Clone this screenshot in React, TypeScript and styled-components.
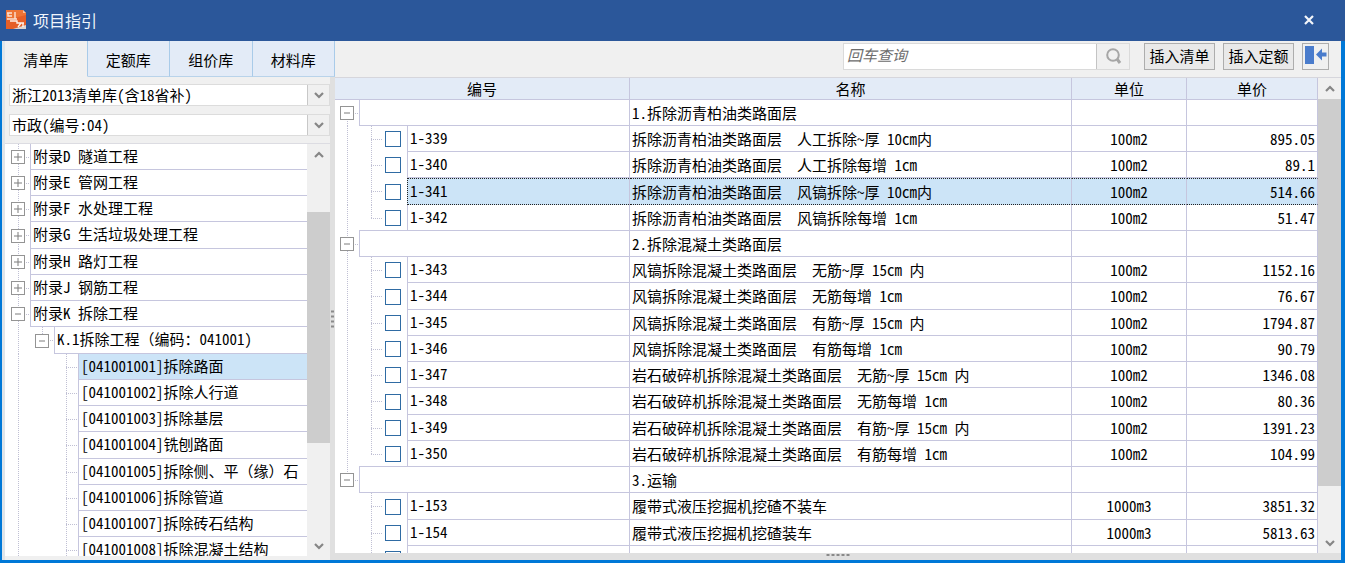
import React, { useState } from "react";
import styled, { createGlobalStyle, css } from "styled-components";

const LINE = "#c6c6de";
const HEADER = "#e3ebf7";
const SELECTED = "#cce4f7";

const GlobalStyle = createGlobalStyle`
  * { box-sizing: border-box; }
  body {
    margin: 0;
    font-family: "Noto Sans CJK SC", "Liberation Sans", sans-serif;
    font-size: 15px;
    font-feature-settings: "hwid";
    color: #000;
  }
  button, input, select { font: inherit; font-feature-settings: inherit; color: inherit; margin: 0; }
  ul { list-style: none; margin: 0; padding: 0; }
`;

const Window = styled.div`
  display: flex;
  flex-direction: column;
  height: 100vh;
  background: #0078d7;
`;

const TitleBar = styled.header`
  display: flex;
  align-items: center;
  flex: none;
  height: 41px;
  padding: 0 28px 2px 6px;
  gap: 6px;
  background: #2b579a;
  color: #f0f5fc;
`;

const Title = styled.h1`
  flex: 1;
  margin: 0;
  font-size: 16px;
  line-height: 24px;
  font-weight: 400;
`;

const CloseButton = styled.button`
  display: flex;
  padding: 2px;
  border: 0;
  background: none;
`;

const Body = styled.main`
  display: flex;
  flex: 1;
  min-height: 0;
  margin: 0 4px 3px 2px;
  background: #f0f0f0;
  border-left: 3px solid #dfe5ea;
`;

const Sidebar = styled.aside`
  display: flex;
  flex-direction: column;
  flex: none;
  width: 330px;
`;

const Tabs = styled.div`
  display: flex;
  flex: none;
  height: 36px;
`;

const Tab = styled.button<{ $active?: boolean }>`
  flex: 1;
  padding: 2px 0 0;
  border: 0;
  border-right: 1px solid #a9cbe9;
  border-bottom: 1px solid ${(p) => (p.$active ? "#f0f0f0" : "#b9d3ea")};
  background: ${(p) => (p.$active ? "#f0f0f0" : HEADER)};
`;

const SidebarMain = styled.div`
  position: relative;
  display: flex;
  flex-direction: column;
  flex: 1;
  min-height: 0;
  padding: 7px 0 4px;
  border-right: 5px solid #e0e0e0;
`;

const SelectBox = styled.label`
  display: grid;
  grid-template-columns: 1fr 22px;
  flex: none;
  height: 22px;
  margin-left: 4px;
  border: 1px solid #dcdcdc;
  background: #fff;
  & + & { margin-top: 8px; }
`;

const Select = styled.select`
  grid-area: 1 / 1 / 2 / 3;
  appearance: none;
  width: 100%;
  height: 20px;
  padding: 0 24px 0 2px;
  border: 0;
  line-height: 20px;
  background: none;
`;

const SelectArrow = styled.span`
  grid-area: 1 / 2 / 2 / 3;
  display: flex;
  align-items: center;
  justify-content: center;
  border-left: 1px solid #c8c8c8;
  background: #f0f0f0;
  pointer-events: none;
`;

const TreePane = styled.div`
  display: flex;
  flex: 1;
  min-height: 0;
  margin-top: 7px;
  border-top: 1px solid #dcdce2;
  background: #fff;
  padding-left: 1px;
`;

const TreeList = styled.ul`
  flex: 1;
  min-width: 0;
  overflow: hidden;
`;

const TreeRow = styled.li`
  display: flex;
  height: 26px;
  &:nth-child(4n) { height: 27px; }
`;

/* One 24px indent step, with the dotted guide lines of the tree. */
const Slot = styled.span<{ $v?: "full" | "upper" | "lower"; $h?: boolean }>`
  display: flex;
  align-items: center;
  justify-content: center;
  flex: none;
  width: 24px;
  background-repeat: no-repeat;
  background-image:
    repeating-linear-gradient(to bottom, #c0c0d4 0 1px, transparent 1px 2px),
    repeating-linear-gradient(to right, #c0c0d4 0 1px, transparent 1px 2px);
  background-size:
    ${(p) => (p.$v ? 1 : 0)}px ${(p) => (p.$v === "full" ? "100%" : "50%")},
    ${(p) => (p.$h ? 12 : 0)}px 1px;
  background-position: 12px ${(p) => (p.$v === "lower" ? "100%" : "0")}, 12px 50%;
`;

const Toggle = styled.button`
  display: flex;
  width: 14px;
  height: 14px;
  padding: 0;
  border: 0;
  background: #fff;
`;

const TreeLabel = styled.span<{ $selected?: boolean }>`
  flex: 1;
  min-width: 0;
  padding-left: 2px;
  border-left: 1px solid ${LINE};
  border-bottom: 1px solid ${LINE};
  line-height: 24px;
  white-space: pre;
  overflow: hidden;
  background: ${(p) => (p.$selected ? SELECTED : "#fff")};
`;

/* Keeps full-width punctuation at its full width. */
const FullWidth = styled.span`
  font-feature-settings: normal;
`;

const ScrollTrack = styled.div`
  display: flex;
  flex-direction: column;
  flex: none;
  width: 23px;
  background: #f0f0f0;
`;

const ScrollButton = styled.button`
  display: flex;
  align-items: center;
  justify-content: center;
  flex: none;
  height: 21px;
  padding: 0;
  border: 0;
  background: #f0f0f0;
`;

const ScrollSpace = styled.div<{ $grow: number }>`
  flex: ${(p) => p.$grow} 1 0;
`;

const ScrollThumb = styled(ScrollSpace)`
  background: #cdcdcd;
`;

const Grip = styled.span<{ $vertical?: boolean }>`
  position: absolute;
  display: grid;
  grid-auto-flow: ${(p) => (p.$vertical ? "row" : "column")};
  gap: ${(p) => (p.$vertical ? 3 : 2)}px;
  ${(p) =>
    p.$vertical
      ? css`right: -4px; top: 50%; transform: translateY(-50%);`
      : css`left: 50%; top: 1px; transform: translateX(-50%);`}
`;

const GripDot = styled.i`
  width: 3px;
  height: 2px;
  background: #8a8a8a;
`;

const Content = styled.section`
  display: flex;
  flex-direction: column;
  flex: 1;
  min-width: 0;
`;

const Toolbar = styled.div`
  display: flex;
  align-items: center;
  justify-content: flex-end;
  flex: none;
  height: 36px;
  padding: 0 12px 6px 0;
  gap: 8px;
`;

const Search = styled.form`
  display: flex;
  width: 287px;
  height: 27px;
  margin-right: 6px;
  border: 1px solid #dadada;
`;

const SearchInput = styled.input`
  flex: 1;
  min-width: 0;
  padding: 0 3px 3px;
  border: 0;
  background: #fff;
  &::placeholder { color: #6d6d6d; font-style: italic; opacity: 1; }
`;

const SearchButton = styled.button`
  display: flex;
  align-items: center;
  justify-content: center;
  width: 33px;
  padding: 0;
  border: 0;
  border-left: 1px solid #c4c4c4;
  background: #f0f0f0;
`;

const ToolButton = styled.button<{ $icon?: boolean }>`
  display: flex;
  align-items: center;
  justify-content: center;
  width: ${(p) => (p.$icon ? 27 : 71)}px;
  height: 27px;
  padding: 0 0 2px;
  border: 1px solid #adadad;
  background: ${(p) => (p.$icon ? "#f0f0f0" : "#e9e9e9")};
  white-space: nowrap;
`;

const TablePane = styled.div`
  display: flex;
  flex: 1;
  min-height: 0;
  border-top: 1px solid #d6d6dc;
  background: #fff;
`;

const TableClip = styled.div`
  flex: 1;
  min-width: 0;
  overflow: hidden;
`;

const Table = styled.table`
  width: 100%;
  table-layout: fixed;
  border-collapse: separate;
  border-spacing: 0;
`;

const HeadCell = styled.th<{ $width?: number }>`
  width: ${(p) => (p.$width ? `${p.$width}px` : "auto")};
  height: 22px;
  padding: 0;
  border-right: 1px solid ${LINE};
  border-bottom: 1px solid ${LINE};
  background: ${HEADER};
  font-weight: 400;
  line-height: 20px;
`;

const selectedEdges = css`
  background: ${SELECTED};
  border-top: 1px dotted #222;
  border-bottom: 1px dotted #222;
`;

const BodyRow = styled.tr`
  height: 26px;
  &:nth-child(4n) { height: 27px; }
`;

const TreeCell = styled.td`
  height: inherit;
  padding: 0;
  border-right: 1px solid ${LINE};
`;

const TreeCellInner = styled.div`
  display: flex;
  height: 100%;
`;

const Cell = styled.td<{ $align?: "center" | "right"; $selected?: boolean }>`
  padding: 0 2px;
  border-right: 1px solid ${LINE};
  border-bottom: 1px solid ${LINE};
  text-align: ${(p) => p.$align ?? "left"};
  line-height: 24px;
  white-space: pre;
  overflow: hidden;
  ${(p) => p.$selected && selectedEdges}
`;

const GroupBox = styled.span`
  flex: 1;
  margin-top: -1px;
  border: 1px solid ${LINE};
  border-right: 0;
`;

const Code = styled.span<{ $selected?: boolean }>`
  flex: 1;
  padding-left: 2px;
  border-left: 1px solid ${LINE};
  border-bottom: 1px solid ${LINE};
  line-height: 24px;
  ${(p) => p.$selected && css`${selectedEdges} border-left: 1px dotted #222;`}
`;

const Check = styled.input`
  appearance: none;
  width: 16px;
  height: 16px;
  margin: 0 4px 0 0;
  border: 1px solid #2f6ba3;
  background: #fff;
  &:checked { background: #2f6ba3; }
`;

const StatusBar = styled.footer`
  position: relative;
  flex: none;
  height: 7px;
  background: #e0e0e0;
`;

function Chevron({ up = false }: { up?: boolean }) {
  return (
    <svg width="10" height="8" viewBox="0 0 10 8" aria-hidden="true">
      <path d={up ? "M1 6 L5 2 L9 6" : "M1 2 L5 6 L9 2"} fill="none" stroke="#868686" strokeWidth="2.2" />
    </svg>
  );
}

function Expander({ open, label }: { open: boolean; label: string }) {
  return (
    <Toggle aria-label={label} aria-expanded={open}>
      <svg width="14" height="14" viewBox="0 0 14 14" aria-hidden="true">
        <rect x="0.5" y="0.5" width="13" height="13" fill="#fff" stroke="#949494" />
        <path d={open ? "M4 7H10" : "M3 7H11M7 3V11"} stroke="#7c7c7c" strokeWidth="1" />
      </svg>
    </Toggle>
  );
}

function Logo() {
  return (
    <svg width="21" height="21" viewBox="0 0 21 21" aria-hidden="true">
      <path d="M0 1H17L20 4V20H0Z" fill="#ee7436" />
      <path d="M0 11L20 6V20H0Z" fill="#e65f28" />
      <path d="M17 1L20 4H17Z" fill="#f9c3a0" />
      <path d="M7 20L20 16V20Z" fill="#dcd6d2" />
      <path d="M1 4H6M2 4V7H6M9 3V10M1 10H11" fill="none" stroke="#fbe3d6" strokeWidth="1.4" />
      <path d="M4 12H11V14H18M12 18L15 14M17 14V18" fill="none" stroke="#fff3ea" strokeWidth="1.4" />
    </svg>
  );
}

function Scrollbar({ before, thumb, after }: { before: number; thumb: number; after: number }) {
  return (
    <ScrollTrack>
      <ScrollButton aria-label="向上滚动"><Chevron up /></ScrollButton>
      <ScrollSpace $grow={before} />
      <ScrollThumb $grow={thumb} />
      <ScrollSpace $grow={after} />
      <ScrollButton aria-label="向下滚动"><Chevron /></ScrollButton>
    </ScrollTrack>
  );
}

function Label({ text }: { text: string }) {
  return (
    <>
      {text.split(/([（）、：])/).map((part, i) => (i % 2 ? <FullWidth key={i}>{part}</FullWidth> : part))}
    </>
  );
}

const tabs = ["清单库", "定额库", "组价库", "材料库"];

const tree = [
  { level: 0, text: "附录D 隧道工程" },
  { level: 0, text: "附录E 管网工程" },
  { level: 0, text: "附录F 水处理工程" },
  { level: 0, text: "附录G 生活垃圾处理工程" },
  { level: 0, text: "附录H 路灯工程" },
  { level: 0, text: "附录J 钢筋工程" },
  { level: 0, text: "附录K 拆除工程", open: true },
  { level: 1, text: "K.1拆除工程（编码：041001)", open: true },
  { level: 2, text: "[041001001]拆除路面", selected: true },
  { level: 2, text: "[041001002]拆除人行道" },
  { level: 2, text: "[041001003]拆除基层" },
  { level: 2, text: "[041001004]铣刨路面" },
  { level: 2, text: "[041001005]拆除侧、平（缘）石" },
  { level: 2, text: "[041001006]拆除管道" },
  { level: 2, text: "[041001007]拆除砖石结构" },
  { level: 2, text: "[041001008]拆除混凝土结构" },
];

type Item = { code?: string; name: string; unit?: string; price?: string; last?: boolean; selected?: boolean };

const items: Item[] = [
  { name: "1.拆除沥青柏油类路面层" },
  { code: "1-339", name: "拆除沥青柏油类路面层  人工拆除~厚 10cm内", unit: "100m2", price: "895.05" },
  { code: "1-340", name: "拆除沥青柏油类路面层  人工拆除每增 1cm", unit: "100m2", price: "89.1" },
  { code: "1-341", name: "拆除沥青柏油类路面层  风镐拆除~厚 10cm内", unit: "100m2", price: "514.66", selected: true },
  { code: "1-342", name: "拆除沥青柏油类路面层  风镐拆除每增 1cm", unit: "100m2", price: "51.47", last: true },
  { name: "2.拆除混凝土类路面层" },
  { code: "1-343", name: "风镐拆除混凝土类路面层  无筋~厚 15cm 内", unit: "100m2", price: "1152.16" },
  { code: "1-344", name: "风镐拆除混凝土类路面层  无筋每增 1cm", unit: "100m2", price: "76.67" },
  { code: "1-345", name: "风镐拆除混凝土类路面层  有筋~厚 15cm 内", unit: "100m2", price: "1794.87" },
  { code: "1-346", name: "风镐拆除混凝土类路面层  有筋每增 1cm", unit: "100m2", price: "90.79" },
  { code: "1-347", name: "岩石破碎机拆除混凝土类路面层  无筋~厚 15cm 内", unit: "100m2", price: "1346.08" },
  { code: "1-348", name: "岩石破碎机拆除混凝土类路面层  无筋每增 1cm", unit: "100m2", price: "80.36" },
  { code: "1-349", name: "岩石破碎机拆除混凝土类路面层  有筋~厚 15cm 内", unit: "100m2", price: "1391.23" },
  { code: "1-350", name: "岩石破碎机拆除混凝土类路面层  有筋每增 1cm", unit: "100m2", price: "104.99", last: true },
  { name: "3.运输" },
  { code: "1-153", name: "履带式液压挖掘机挖碴不装车", unit: "1000m3", price: "3851.32" },
  { code: "1-154", name: "履带式液压挖掘机挖碴装车", unit: "1000m3", price: "5813.63" },
  { code: "", name: "" },
];

function ItemRow({ item, root }: { item: Item; root: "full" | "upper" | "lower" | undefined }) {
  const group = item.code === undefined;
  return (
    <BodyRow>
      <TreeCell>
        <TreeCellInner>
          <Slot $v={root} $h={group}>{group && <Expander open label={item.name} />}</Slot>
          {group ? (
            <GroupBox />
          ) : (
            <>
              <Slot $v={item.last ? "upper" : "full"} $h />
              <Slot><Check type="checkbox" aria-label={item.code || "定额"} /></Slot>
              <Code $selected={item.selected}>{item.code}</Code>
            </>
          )}
        </TreeCellInner>
      </TreeCell>
      <Cell $selected={item.selected}>{item.name}</Cell>
      <Cell $align="center" $selected={item.selected}>{item.unit}</Cell>
      <Cell $align="right" $selected={item.selected}>{item.price}</Cell>
    </BodyRow>
  );
}

export default function App() {
  const [tab, setTab] = useState(0);
  const lastGroup = items.map((i) => i.code === undefined).lastIndexOf(true);
  const rootLine = (i: number) =>
    i === 0 ? "lower" : i < lastGroup ? "full" : i === lastGroup ? "upper" : undefined;

  return (
    <Window>
      <GlobalStyle />
      <TitleBar>
        <Logo />
        <Title>项目指引</Title>
        <CloseButton aria-label="关闭">
          <svg width="12" height="10" viewBox="0 0 12 10" aria-hidden="true">
            <path d="M2 1L10 9M10 1L2 9" stroke="#f4f7fb" strokeWidth="2.2" />
          </svg>
        </CloseButton>
      </TitleBar>
      <Body>
        <Sidebar>
          <Tabs role="tablist">
            {tabs.map((t, i) => (
              <Tab key={t} role="tab" aria-selected={i === tab} $active={i === tab} onClick={() => setTab(i)}>
                {t}
              </Tab>
            ))}
          </Tabs>
          <SidebarMain>
            <SelectBox>
              <Select aria-label="清单库"><option>浙江2013清单库(含18省补)</option></Select>
              <SelectArrow><Chevron /></SelectArrow>
            </SelectBox>
            <SelectBox>
              <Select aria-label="专业"><option>市政(编号:04)</option></Select>
              <SelectArrow><Chevron /></SelectArrow>
            </SelectBox>
            <TreePane>
              <TreeList>
                {tree.map((n) => (
                  <TreeRow key={n.text}>
                    <Slot $v="full" $h={n.level === 0}>
                      {n.level === 0 && <Expander open={!!n.open} label={n.text} />}
                    </Slot>
                    {n.level === 1 && <Slot $v="upper" $h><Expander open label={n.text} /></Slot>}
                    {n.level === 2 && <><Slot /><Slot $v="full" $h /></>}
                    <TreeLabel $selected={n.selected}><Label text={n.text} /></TreeLabel>
                  </TreeRow>
                ))}
              </TreeList>
              <Scrollbar before={47} thumb={232} after={93} />
            </TreePane>
            <Grip $vertical>{[0, 1, 2, 3].map((d) => <GripDot key={d} />)}</Grip>
          </SidebarMain>
        </Sidebar>
        <Content>
          <Toolbar>
            <Search onSubmit={(e) => e.preventDefault()}>
              <SearchInput placeholder="回车查询" aria-label="回车查询" />
              <SearchButton aria-label="查询">
                <svg width="18" height="18" viewBox="0 0 18 18" aria-hidden="true">
                  <circle cx="9" cy="8" r="5.8" fill="none" stroke="#a6a6a6" strokeWidth="2" />
                  <path d="M13 12L16 16" stroke="#a6a6a6" strokeWidth="3" />
                </svg>
              </SearchButton>
            </Search>
            <ToolButton>插入清单</ToolButton>
            <ToolButton>插入定额</ToolButton>
            <ToolButton $icon aria-label="收起面板">
              <svg width="23" height="18" viewBox="0 0 23 18" aria-hidden="true">
                <rect x="1" y="0" width="9" height="18" fill="#4a7ccc" />
                <path d="M12 8.500L18 2.500V6.500H22.500V10.500H18V14.500Z" fill="#4a7ccc" />
              </svg>
            </ToolButton>
          </Toolbar>
          <TablePane>
            <TableClip>
              <Table>
                <thead>
                  <tr>
                    <HeadCell $width={295}>编号</HeadCell>
                    <HeadCell>名称</HeadCell>
                    <HeadCell $width={115}>单位</HeadCell>
                    <HeadCell $width={131}>单价</HeadCell>
                  </tr>
                </thead>
                <tbody>
                  {items.map((item, i) => (
                    <ItemRow key={i} item={item} root={rootLine(i)} />
                  ))}
                </tbody>
              </Table>
            </TableClip>
            <Scrollbar before={0} thumb={387} after={46} />
          </TablePane>
          <StatusBar>
            <Grip>{[0, 1, 2, 3, 4].map((d) => <GripDot key={d} />)}</Grip>
          </StatusBar>
        </Content>
      </Body>
    </Window>
  );
}
